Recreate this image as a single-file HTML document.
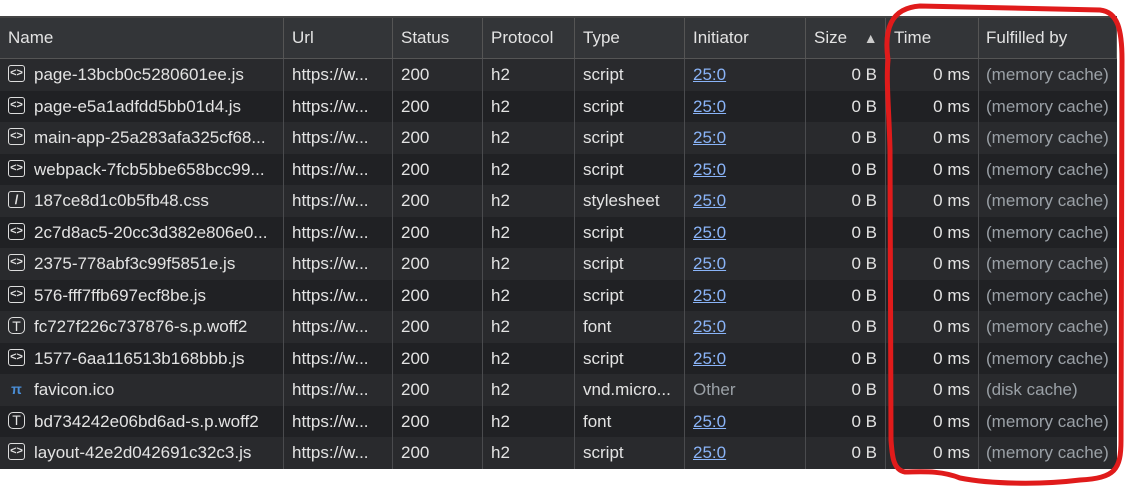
<!DOCTYPE html>
<html><head><style>
body{margin:0;width:1129px;height:489px;background:#fff;position:relative;overflow:hidden;font-family:"Liberation Sans",sans-serif;font-size:17px;color:#e3e3e3}
.t{position:absolute;left:0;top:18px;width:1117px;background:#202124}
.r{position:relative;height:31.5px;display:flex}
.h{height:40px;background:#333538;border-bottom:1px solid #555}
.r.o{background:#292a2d}
.c{box-sizing:border-box;border-right:1px solid #4a4b4e;padding:0 8px;line-height:31.5px;white-space:nowrap;overflow:hidden}
.h .c{line-height:40px;border-right:1px solid #555}
.c1{width:284px;padding-left:8px}.c2{width:109px}.c3{width:90px}.c4{width:92px}.c5{width:110px}.c6{width:121px}.c7{width:80px;text-align:right}.c8{width:93px;text-align:right}.c9{width:138px;color:#9aa0a6;border-right:none;padding-left:7px}
.h .c7,.h .c8{text-align:left}.h .c9{color:#e3e3e3}
a{color:#8ab4f8;text-decoration:underline}
.ic{display:inline-flex;align-items:center;justify-content:center;width:17px;height:17px;border:1.6px solid #ddd;border-radius:3px;vertical-align:middle;position:relative;top:-2px;margin-right:9px;font-size:11px;box-sizing:border-box;font-weight:bold;line-height:1}
.tt{border-radius:5px;font-size:14px;font-weight:normal}
</style></head><body>
<div style="position:absolute;left:0;top:16px;width:1117px;height:2px;background:#444"></div>
<div class="t">
<div class="r h"><div class="c c1">Name</div><div class="c c2">Url</div><div class="c c3">Status</div><div class="c c4">Protocol</div><div class="c c5">Type</div><div class="c c6">Initiator</div><div class="c c7">Size <span style="font-size:14px;color:#ccc;margin-left:12px">▲</span></div><div class="c c8">Time</div><div class="c c9">Fulfilled by</div></div>
<div class="r o"><div class="c c1"><span class="ic">&lt;&gt;</span>page-13bcb0c5280601ee.js</div><div class="c c2">https://w...</div><div class="c c3">200</div><div class="c c4">h2</div><div class="c c5">script</div><div class="c c6"><a>25:0</a></div><div class="c c7">0 B</div><div class="c c8">0 ms</div><div class="c c9">(memory cache)</div></div>
<div class="r"><div class="c c1"><span class="ic">&lt;&gt;</span>page-e5a1adfdd5bb01d4.js</div><div class="c c2">https://w...</div><div class="c c3">200</div><div class="c c4">h2</div><div class="c c5">script</div><div class="c c6"><a>25:0</a></div><div class="c c7">0 B</div><div class="c c8">0 ms</div><div class="c c9">(memory cache)</div></div>
<div class="r o"><div class="c c1"><span class="ic">&lt;&gt;</span>main-app-25a283afa325cf68...</div><div class="c c2">https://w...</div><div class="c c3">200</div><div class="c c4">h2</div><div class="c c5">script</div><div class="c c6"><a>25:0</a></div><div class="c c7">0 B</div><div class="c c8">0 ms</div><div class="c c9">(memory cache)</div></div>
<div class="r"><div class="c c1"><span class="ic">&lt;&gt;</span>webpack-7fcb5bbe658bcc99...</div><div class="c c2">https://w...</div><div class="c c3">200</div><div class="c c4">h2</div><div class="c c5">script</div><div class="c c6"><a>25:0</a></div><div class="c c7">0 B</div><div class="c c8">0 ms</div><div class="c c9">(memory cache)</div></div>
<div class="r o"><div class="c c1"><span class="ic" style="font-size:13px">/</span>187ce8d1c0b5fb48.css</div><div class="c c2">https://w...</div><div class="c c3">200</div><div class="c c4">h2</div><div class="c c5">stylesheet</div><div class="c c6"><a>25:0</a></div><div class="c c7">0 B</div><div class="c c8">0 ms</div><div class="c c9">(memory cache)</div></div>
<div class="r"><div class="c c1"><span class="ic">&lt;&gt;</span>2c7d8ac5-20cc3d382e806e0...</div><div class="c c2">https://w...</div><div class="c c3">200</div><div class="c c4">h2</div><div class="c c5">script</div><div class="c c6"><a>25:0</a></div><div class="c c7">0 B</div><div class="c c8">0 ms</div><div class="c c9">(memory cache)</div></div>
<div class="r o"><div class="c c1"><span class="ic">&lt;&gt;</span>2375-778abf3c99f5851e.js</div><div class="c c2">https://w...</div><div class="c c3">200</div><div class="c c4">h2</div><div class="c c5">script</div><div class="c c6"><a>25:0</a></div><div class="c c7">0 B</div><div class="c c8">0 ms</div><div class="c c9">(memory cache)</div></div>
<div class="r"><div class="c c1"><span class="ic">&lt;&gt;</span>576-fff7ffb697ecf8be.js</div><div class="c c2">https://w...</div><div class="c c3">200</div><div class="c c4">h2</div><div class="c c5">script</div><div class="c c6"><a>25:0</a></div><div class="c c7">0 B</div><div class="c c8">0 ms</div><div class="c c9">(memory cache)</div></div>
<div class="r o"><div class="c c1"><span class="ic tt">T</span>fc727f226c737876-s.p.woff2</div><div class="c c2">https://w...</div><div class="c c3">200</div><div class="c c4">h2</div><div class="c c5">font</div><div class="c c6"><a>25:0</a></div><div class="c c7">0 B</div><div class="c c8">0 ms</div><div class="c c9">(memory cache)</div></div>
<div class="r"><div class="c c1"><span class="ic">&lt;&gt;</span>1577-6aa116513b168bbb.js</div><div class="c c2">https://w...</div><div class="c c3">200</div><div class="c c4">h2</div><div class="c c5">script</div><div class="c c6"><a>25:0</a></div><div class="c c7">0 B</div><div class="c c8">0 ms</div><div class="c c9">(memory cache)</div></div>
<div class="r o"><div class="c c1"><span class="ic" style="border:none;color:#4a8fd8;font-size:14px">π</span>favicon.ico</div><div class="c c2">https://w...</div><div class="c c3">200</div><div class="c c4">h2</div><div class="c c5">vnd.micro...</div><div class="c c6" style="color:#9aa0a6">Other</div><div class="c c7">0 B</div><div class="c c8">0 ms</div><div class="c c9">(disk cache)</div></div>
<div class="r"><div class="c c1"><span class="ic tt">T</span>bd734242e06bd6ad-s.p.woff2</div><div class="c c2">https://w...</div><div class="c c3">200</div><div class="c c4">h2</div><div class="c c5">font</div><div class="c c6"><a>25:0</a></div><div class="c c7">0 B</div><div class="c c8">0 ms</div><div class="c c9">(memory cache)</div></div>
<div class="r o"><div class="c c1"><span class="ic">&lt;&gt;</span>layout-42e2d042691c32c3.js</div><div class="c c2">https://w...</div><div class="c c3">200</div><div class="c c4">h2</div><div class="c c5">script</div><div class="c c6"><a>25:0</a></div><div class="c c7">0 B</div><div class="c c8">0 ms</div><div class="c c9">(memory cache)</div></div>
</div>
<svg width="1129" height="489" style="position:absolute;left:0;top:0">
<path d="M888,60 C884,30 890,8 920,6 L1100,10 C1118,12 1122,30 1122,60 L1121,440 C1121,470 1115,478 1080,480 C1040,485 990,484 960,478 C940,470 920,472 905,472 C893,470 892,455 891,440 L890,150 C889,110 886,80 888,60 Z" fill="none" stroke="#e01b1b" stroke-width="5"/>
</svg>
</body></html>
